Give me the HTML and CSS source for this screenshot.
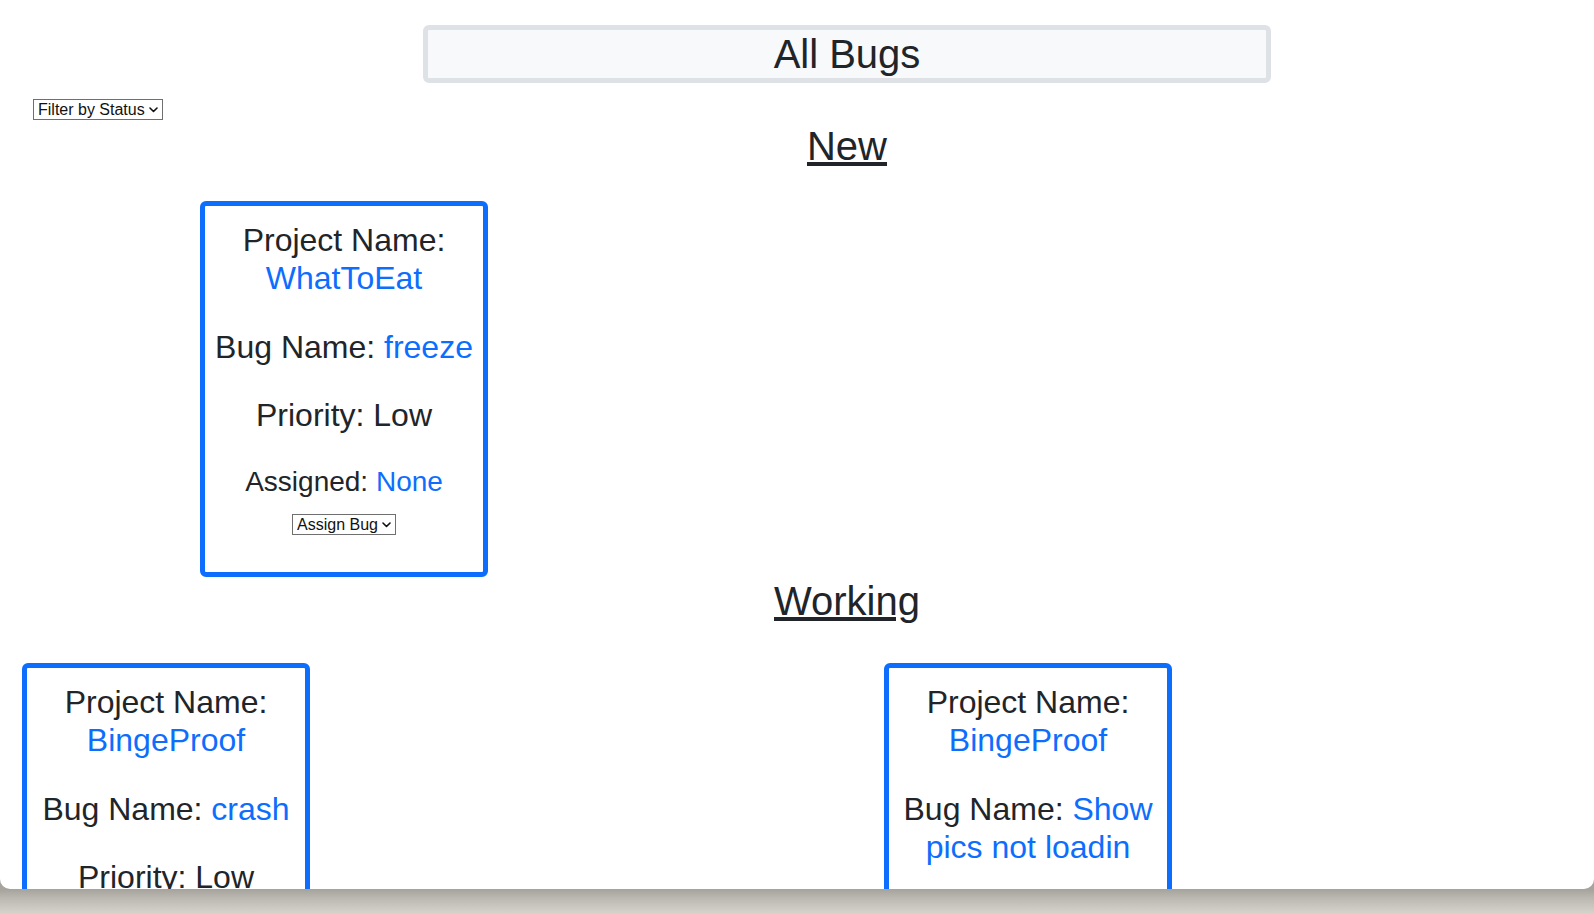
FILE: index.html
```html
<!DOCTYPE html>
<html lang="en">
<head>
<meta charset="utf-8">
<title>All Bugs</title>
<link rel="stylesheet" href="styles.css">
</head>
<body>
<div class="window">
  <h1 class="title">All Bugs</h1>
  <div class="filter-row">
    <span class="select-wrap">
      <select class="select"><option>Filter by Status</option></select>
      <svg class="chev" width="9" height="6" viewBox="0 0 9 6"><path d="M1 1 L4.5 4.5 L8 1" fill="none" stroke="#111" stroke-width="1.6" stroke-linecap="round" stroke-linejoin="round"/></svg>
    </span>
  </div>

  <h1 class="status-title status-new">New</h1>
  <div class="cards cards-new">
    <div class="card">
      <div class="item">Project Name: <span class="val">WhatToEat</span></div>
      <div class="item">Bug Name: <span class="val">freeze</span></div>
      <div class="item">Priority: Low</div>
      <div class="item item-sm">Assigned: <span class="val">None</span></div>
      <span class="select-wrap assign">
        <select class="select"><option>Assign Bug</option></select>
        <svg class="chev" width="9" height="6" viewBox="0 0 9 6"><path d="M1 1 L4.5 4.5 L8 1" fill="none" stroke="#111" stroke-width="1.6" stroke-linecap="round" stroke-linejoin="round"/></svg>
      </span>
    </div>
  </div>

  <h1 class="status-title status-working">Working</h1>
  <div class="cards cards-working">
    <div class="card">
      <div class="item">Project Name: <span class="val">BingeProof</span></div>
      <div class="item">Bug Name: <span class="val">crash</span></div>
      <div class="item">Priority: Low</div>
    </div>
    <div class="card">
      <div class="item">Project Name: <span class="val">BingeProof</span></div>
      <div class="item"><span>Bug Name: </span><span class="val">Show pics not loadin</span></div>
    </div>
  </div>
</div>
</body>
</html>
```

FILE: styles.css
```css
html, body {
  margin: 0;
  padding: 0;
}

body {
  width: 1594px;
  height: 914px;
  overflow: hidden;
  background: linear-gradient(to bottom, #8e8c88 0px, #a7a49e 890px, #b9b6b0 897px, #d7d4cd 914px);
  font-family: "Liberation Sans", Arial, sans-serif;
  color: #212529;
}

.window {
  height: 889px;
  overflow: hidden;
  background: #ffffff;
  border-bottom-left-radius: 10px;
  border-bottom-right-radius: 10px;
  padding-top: 25px;
  box-sizing: border-box;
}

.title {
  box-sizing: border-box;
  width: 848px;
  margin: 0 0 0 423px;
  border: 5px solid #dee2e6;
  border-radius: 6px;
  background: #f8f9fa;
  font-size: 40px;
  line-height: 48px;
  font-weight: 400;
  text-align: center;
}

.filter-row {
  margin-top: 16px;
  padding-left: 33px;
  height: 21px;
  display: flex;
}

.select-wrap {
  position: relative;
  display: inline-flex;
  height: 21px;
}

.select {
  appearance: none;
  -webkit-appearance: none;
  margin: 0;
  height: 21px;
  box-sizing: border-box;
  border: 1px solid #6f6f6f;
  border-radius: 0;
  background: #ffffff;
  color: #111111;
  font-family: "Liberation Sans", Arial, sans-serif;
  font-size: 16px;
  line-height: 19px;
  padding: 0 17px 0 4px;
}

.chev {
  position: absolute;
  right: 5px;
  top: 8px;
  pointer-events: none;
}

.status-title {
  margin: 0;
  padding-left: 100px;
  font-size: 40px;
  line-height: 48px;
  font-weight: 400;
  text-align: center;
  text-decoration: underline;
}

.status-new {
  margin-top: 2px;
}

.cards {
  display: flex;
  align-items: flex-start;
}

.cards-new {
  margin-top: 31px;
  padding-left: 200px;
}

.cards-working {
  margin-top: 38px;
  padding-left: 22px;
  gap: 574px;
}

.card {
  box-sizing: border-box;
  width: 288px;
  height: 376px;
  border: 5px solid #0d6efd;
  border-radius: 6px;
  padding: 15px 8px 0;
  display: flex;
  flex-direction: column;
  align-items: center;
  gap: 30px;
  text-align: center;
  font-size: 32px;
  line-height: 38.4px;
}

.cards-working .card {
  height: 420px;
}

.item {
  width: 100%;
}

.item-sm {
  font-size: 28px;
  line-height: 33.6px;
}

.val {
  color: #0d6efd;
}

.assign {
  margin-top: -14px;
}
```
